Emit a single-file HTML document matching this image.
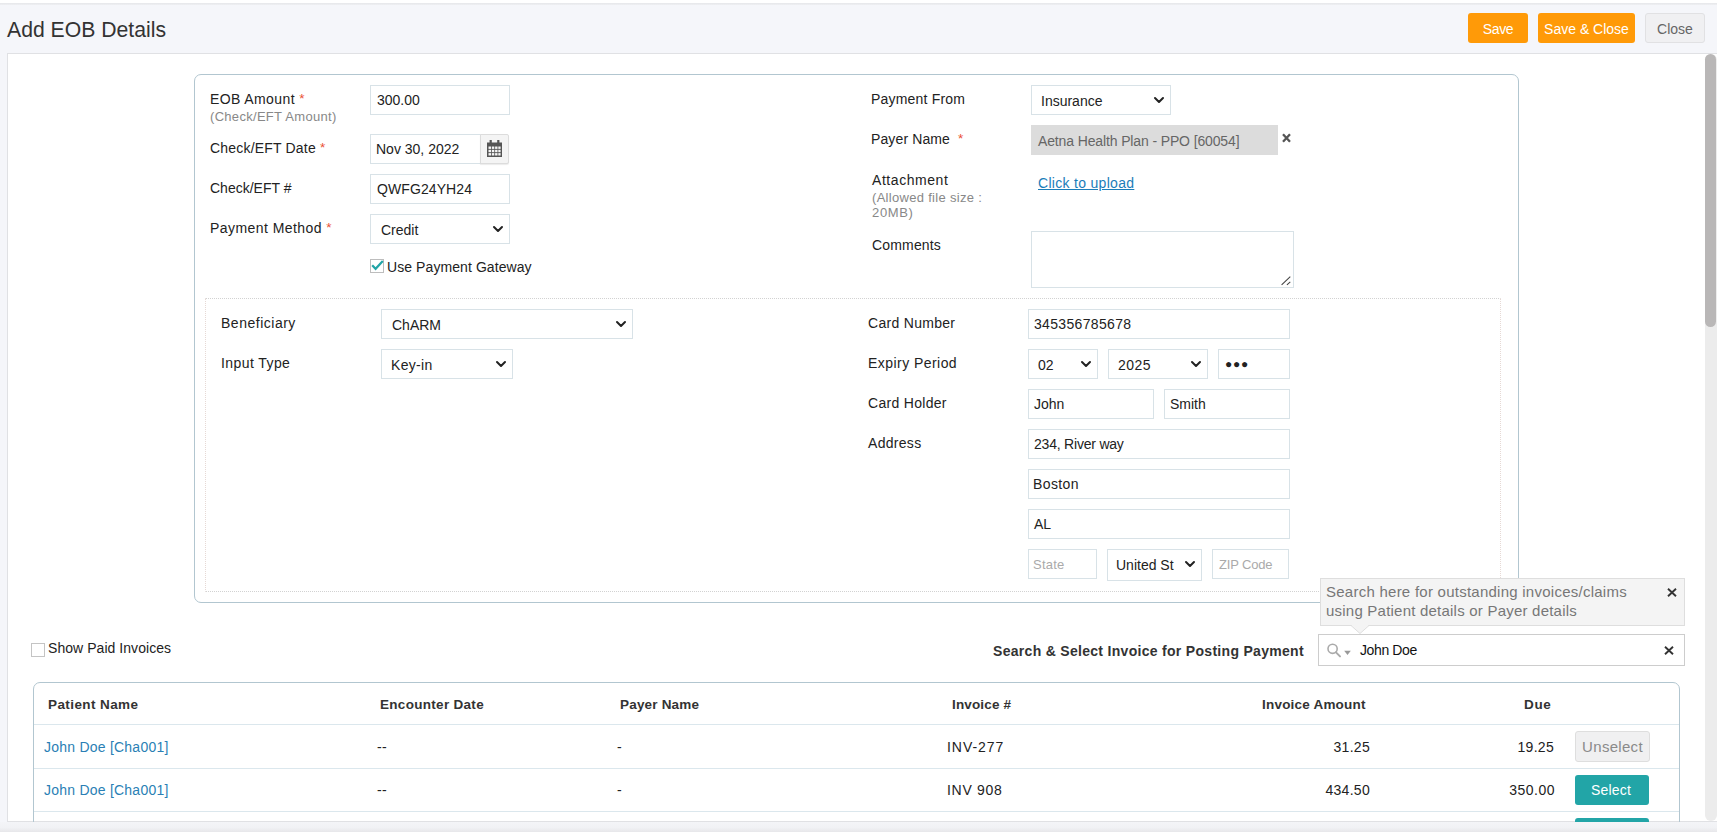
<!DOCTYPE html>
<html lang="en">
<head>
<meta charset="utf-8">
<title>Add EOB Details</title>
<style>
*{box-sizing:border-box;margin:0;padding:0}
html,body{width:1717px;height:832px;overflow:hidden;background:#f5f6fa;font-family:"Liberation Sans",sans-serif;font-size:14px;color:#222}
.abs,.abs>*{position:absolute}
#page{position:relative;width:1717px;height:832px;overflow:hidden}
.t{position:absolute;white-space:nowrap;line-height:16px;transform-origin:0 50%}
#topstrip{left:0;top:0;width:1717px;height:3px;background:#fff}
#topline{left:0;top:3px;width:1717px;height:2px;background:linear-gradient(#e6e7ea,#eff0f3)}
#title{left:7px;top:17px;font-size:21.2px;line-height:26px;color:#333}
.btn{position:absolute;top:13px;height:30px;border-radius:3px;color:#fff;background:#ff9a08;text-align:center;font-size:14px;line-height:32px;white-space:nowrap}
#bclose{background:#f0f0f2;border:1px solid #e1e1e3;color:#666;line-height:30px}
#panel{left:7px;top:53px;width:1710px;height:769px;background:#fff;border:1px solid #e0e1e4;border-right:none}
#sbtrack{left:1705px;top:54px;width:12px;height:767px;background:#ececec;border-radius:6px}
#sbthumb{left:1705px;top:54px;width:11px;height:273px;background:#b9b7b7;border-radius:6px}
#botbar{left:0;top:822px;width:1717px;height:10px;background:linear-gradient(#f4f5f8 0%,#f1f2f5 55%,#e7e7ea 100%)}
#formbox{left:194px;top:74px;width:1325px;height:529px;border:1px solid #b2c6d0;border-radius:7px}
#inner{left:205px;top:298px;width:1296px;height:294px;border:1px dotted #d2d2d2;border-left-color:#e6d9d5;border-right-color:#e6d9d5}
.in{position:absolute;height:30px;border:1px solid #d8e2e7;background:#fff;font-size:14px;line-height:29px;padding-left:6px;white-space:nowrap;color:#222;overflow:hidden}
.sel{line-height:30px}
.lbl{position:absolute;white-space:nowrap;font-size:14px;line-height:16px;color:#222;letter-spacing:.3px}
.sub{position:absolute;white-space:nowrap;font-size:13px;line-height:16px;color:#888;letter-spacing:.3px}
.req{color:#ea4e33;font-size:13.5px;position:relative;top:-1px;letter-spacing:0}
.ph{color:#aaa;font-size:13px}
.th{font-weight:bold;color:#333;font-size:13.5px}
.lk{color:#2a7fb5}
.tb{border-radius:3px;text-align:center;font-size:15px;white-space:nowrap;letter-spacing:.3px}
.chev{position:absolute;right:6.5px;top:11px;width:10px;height:6px}
svg{position:absolute;overflow:visible}
</style>
</head>
<body>
<div id="page">
<div class="abs" id="topstrip"></div>
<div class="abs" id="topline"></div>
<div class="t" id="title">Add EOB Details</div>
<div class="btn" id="bsave" style="left:1468px;width:60px;letter-spacing:-0.34px">Save</div>
<div class="btn" id="bsc" style="left:1538px;width:97px">Save &amp; Close</div>
<div class="btn" id="bclose" style="left:1645px;width:60px">Close</div>
<div class="abs" id="panel"></div>
<div class="abs" id="sbtrack"></div>
<div class="abs" id="sbthumb"></div>
<div class="abs" id="formbox"></div>
<div class="abs" id="inner"></div>

<!-- left column -->
<div class="lbl" id="l1" style="left:210px;top:91px;letter-spacing:0.4px">EOB Amount <span class="req">*</span></div>
<div class="sub" id="l1s" style="left:210px;top:109px">(Check/EFT Amount)</div>
<div class="in" id="i1" style="left:370px;top:85px;width:140px">300.00</div>
<div class="lbl" id="l2" style="left:210px;top:140px;letter-spacing:0.19px">Check/EFT Date <span class="req">*</span></div>
<div class="in" id="i2" style="left:370px;top:134px;width:111px;padding-left:5px">Nov 30, 2022</div>
<div class="lbl" id="l3" style="left:210px;top:180px;letter-spacing:0px">Check/EFT #</div>
<div class="in" id="i3" style="left:370px;top:174px;width:140px;letter-spacing:0.09px">QWFG24YH24</div>
<div class="lbl" id="l4" style="left:210px;top:220px;letter-spacing:0.44px">Payment Method <span class="req">*</span></div>
<div class="in sel" id="i4" style="left:370px;top:214px;width:140px;padding-left:10px">Credit<svg class="chev" viewBox="0 0 10 6"><path d="M1 1 L5 5 L9 1" fill="none" stroke="#222" stroke-width="2" stroke-linecap="round" stroke-linejoin="round"/></svg></div>
<div class="lbl" id="l5" style="left:387px;top:259px;letter-spacing:0.08px">Use Payment Gateway</div>

<!-- right column -->
<div class="lbl" id="r1" style="left:871px;top:91px;letter-spacing:0.2px">Payment From</div>
<div class="in sel" id="ri1" style="left:1031px;top:85px;width:140px;padding-left:9px">Insurance<svg class="chev" viewBox="0 0 10 6"><path d="M1 1 L5 5 L9 1" fill="none" stroke="#222" stroke-width="2" stroke-linecap="round" stroke-linejoin="round"/></svg></div>
<div class="lbl" id="r2" style="left:871px;top:131px;letter-spacing:0.12px">Payer Name &nbsp;<span class="req">*</span></div>
<div class="in" id="ri2" style="left:1031px;top:125px;width:247px;background:#dcdcdc;border-color:#dcdcdc;color:#666;letter-spacing:-0.13px;line-height:31px">Aetna Health Plan - PPO [60054]</div>
<div class="lbl" id="r3" style="left:872px;top:172px;letter-spacing:0.56px">Attachment</div>
<div class="sub" id="r3s" style="left:872px;top:190px">(Allowed file size :</div>
<div class="sub" id="r3t" style="left:872px;top:205px;letter-spacing:0.65px">20MB)</div>
<div class="lbl" id="ru" style="left:1038px;top:175px;color:#1b7db9;text-decoration:underline">Click to upload</div>
<div class="lbl" id="r4" style="left:872px;top:237px;letter-spacing:0.17px">Comments</div>
<div class="in" id="ri4" style="left:1031px;top:231px;width:263px;height:57px"></div>

<!-- gateway section -->
<div class="lbl" id="g1" style="left:221px;top:315px;letter-spacing:0.51px">Beneficiary</div>
<div class="in sel" id="gi1" style="left:381px;top:309px;width:252px;padding-left:10px">ChARM<svg class="chev" viewBox="0 0 10 6"><path d="M1 1 L5 5 L9 1" fill="none" stroke="#222" stroke-width="2" stroke-linecap="round" stroke-linejoin="round"/></svg></div>
<div class="lbl" id="g2" style="left:221px;top:355px;letter-spacing:0.42px">Input Type</div>
<div class="in sel" id="gi2" style="left:381px;top:349px;width:132px;padding-left:9px;letter-spacing:0.32px">Key-in<svg class="chev" viewBox="0 0 10 6"><path d="M1 1 L5 5 L9 1" fill="none" stroke="#222" stroke-width="2" stroke-linecap="round" stroke-linejoin="round"/></svg></div>

<div class="lbl" id="c1" style="left:868px;top:315px">Card Number</div>
<div class="in" id="ci1" style="left:1028px;top:309px;width:262px;letter-spacing:0.33px;padding-left:5px">345356785678</div>
<div class="lbl" id="c2" style="left:868px;top:355px;letter-spacing:0.45px">Expiry Period</div>
<div class="in sel" id="ci2a" style="left:1028px;top:349px;width:70px;padding-left:9px">02<svg class="chev" viewBox="0 0 10 6"><path d="M1 1 L5 5 L9 1" fill="none" stroke="#222" stroke-width="2" stroke-linecap="round" stroke-linejoin="round"/></svg></div>
<div class="in sel" id="ci2b" style="left:1108px;top:349px;width:100px;padding-left:9px;letter-spacing:0.5px">2025<svg class="chev" viewBox="0 0 10 6"><path d="M1 1 L5 5 L9 1" fill="none" stroke="#222" stroke-width="2" stroke-linecap="round" stroke-linejoin="round"/></svg></div>
<div class="in" id="ci2c" style="left:1218px;top:349px;width:72px;font-size:12px;letter-spacing:.7px">&#9679;&#9679;&#9679;</div>
<div class="lbl" id="c3" style="left:868px;top:395px">Card Holder</div>
<div class="in" id="ci3a" style="left:1028px;top:389px;width:126px;padding-left:5px">John</div>
<div class="in" id="ci3b" style="left:1164px;top:389px;width:126px;padding-left:5px">Smith</div>
<div class="lbl" id="c4" style="left:868px;top:435px">Address</div>
<div class="in" id="ci4" style="left:1028px;top:429px;width:262px;letter-spacing:-0.21px;padding-left:5px">234, River way</div>
<div class="in" id="ci5" style="left:1028px;top:469px;width:262px;letter-spacing:0.38px;padding-left:4px">Boston</div>
<div class="in" id="ci6" style="left:1028px;top:509px;width:262px;padding-left:5px">AL</div>
<div class="in ph" id="ci7a" style="left:1028px;top:549px;width:69px;letter-spacing:0.22px;padding-left:4px">State</div>
<div class="in sel" id="ci7b" style="left:1107px;top:549px;width:95px;height:32px;padding-left:8px">United St<svg class="chev" viewBox="0 0 10 6"><path d="M1 1 L5 5 L9 1" fill="none" stroke="#222" stroke-width="2" stroke-linecap="round" stroke-linejoin="round"/></svg></div>
<div class="in ph" id="ci7c" style="left:1212px;top:549px;width:77px;letter-spacing:-0.16px">ZIP Code</div>

<!-- tooltip -->
<div class="abs" id="tip" style="left:1320px;top:578px;width:365px;height:48px;background:#f4f4f4;border:1px solid #dedede"></div>
<div class="lbl" id="tp1" style="left:1326px;top:583px;font-size:15px;color:#777;line-height:18px;letter-spacing:0.25px">Search here for outstanding invoices/claims</div>
<div class="lbl" id="tp2" style="left:1326px;top:602px;font-size:15px;color:#777;line-height:18px;letter-spacing:0.22px">using Patient details or Payer details</div>

<!-- search row -->
<div class="abs" id="cb2" style="left:31px;top:643px;width:14px;height:14px;border:1px solid #c4c4c4;background:#fff"></div>
<div class="lbl" id="sp" style="left:48px;top:640px;letter-spacing:0.05px">Show Paid Invoices</div>
<div class="lbl" id="ss" style="left:993px;top:643px;font-weight:bold;color:#333;font-size:14px">Search &amp; Select Invoice for Posting Payment</div>
<div class="in" id="si" style="left:1318px;top:634px;width:367px;height:32px;line-height:30px;padding-left:41px;border-color:#cdcdcd;color:#111;letter-spacing:-0.39px">John Doe</div>

<!-- table -->
<div class="abs" id="tbl" style="left:33px;top:682px;width:1647px;height:160px;border:1px solid #b2c6d0;border-radius:7px"></div>
<div class="abs" id="hl1" style="left:34px;top:724px;width:1645px;height:1px;background:#dbe7ed"></div>
<div class="abs" id="hl2" style="left:34px;top:768px;width:1645px;height:1px;background:#dbe7ed"></div>
<div class="abs" id="hl3" style="left:34px;top:811px;width:1645px;height:1px;background:#dbe7ed"></div>
<div class="lbl th" id="h1" style="left:48px;top:697px;letter-spacing:0.41px">Patient Name</div>
<div class="lbl th" id="h2" style="left:380px;top:697px">Encounter Date</div>
<div class="lbl th" id="h3" style="left:620px;top:697px;letter-spacing:0.19px">Payer Name</div>
<div class="lbl th" id="h4" style="left:952px;top:697px;letter-spacing:0.15px">Invoice #</div>
<div class="lbl th" id="h5" style="left:1262px;top:697px;letter-spacing:0.21px">Invoice Amount</div>
<div class="lbl th" id="h6" style="left:1524px;top:697px;letter-spacing:0.65px">Due</div>

<div class="lbl lk" id="a1" style="left:44px;top:739px;letter-spacing:0.23px">John Doe [Cha001]</div>
<div class="lbl" id="a2" style="left:377px;top:739px">--</div>
<div class="lbl" id="a3" style="left:617px;top:739px">-</div>
<div class="lbl" id="a4" style="left:947px;top:739px;letter-spacing:0.95px">INV-277</div>
<div class="lbl num" id="a5" style="right:347px;top:739px">31.25</div>
<div class="lbl num" id="a6" style="right:163px;top:739px">19.25</div>
<div class="abs tb" id="a7" style="left:1575px;top:731px;width:75px;height:31px;background:#f0f0f1;border:1px solid #dedede;color:#8a8a8a;line-height:30px">Unselect</div>

<div class="lbl lk" id="b1" style="left:44px;top:782px;letter-spacing:0.23px">John Doe [Cha001]</div>
<div class="lbl" id="b2" style="left:377px;top:782px">--</div>
<div class="lbl" id="b3" style="left:617px;top:782px">-</div>
<div class="lbl" id="b4" style="left:947px;top:782px;letter-spacing:0.72px">INV 908</div>
<div class="lbl num" id="b5" style="right:347px;top:782px">434.50</div>
<div class="lbl num" id="b6" style="right:162px;top:782px;letter-spacing:0.5px">350.00</div>
<div class="abs tb" id="b7" style="left:1575px;top:775px;width:74px;height:30px;background:#22a5a7;color:#fff;line-height:30px;font-size:14px;letter-spacing:0.18px;padding-right:2px">Select</div>
<div class="abs tb" id="c7" style="left:1575px;top:818px;width:74px;height:30px;background:#22a5a7;color:#fff"></div>

<!-- icons -->
<div class="abs" id="calbtn" style="left:480px;top:134px;width:29px;height:30px;background:#f4f4f4;border:1px solid #dcdcdc;border-radius:0 2px 2px 0;box-shadow:0 1px 1px rgba(0,0,0,.08)"></div>
<svg id="calico" style="left:487px;top:140px" width="15" height="17" viewBox="0 0 15 17">
<rect x="0" y="2.5" width="15" height="14.5" fill="#555"/>
<rect x="2.6" y="0" width="2.2" height="4.5" fill="#555"/><rect x="10.2" y="0" width="2.2" height="4.5" fill="#555"/>
<g fill="#f4f4f4"><rect x="1.5" y="6.5" width="2.6" height="2.4"/><rect x="4.9" y="6.5" width="2.4" height="2.4"/><rect x="8.1" y="6.5" width="2.4" height="2.4"/><rect x="11.3" y="6.5" width="2.3" height="2.4"/>
<rect x="1.5" y="9.8" width="2.6" height="2.4"/><rect x="4.9" y="9.8" width="2.4" height="2.4"/><rect x="8.1" y="9.8" width="2.4" height="2.4"/><rect x="11.3" y="9.8" width="2.3" height="2.4"/>
<rect x="1.5" y="13.1" width="2.6" height="2.4"/><rect x="4.9" y="13.1" width="2.4" height="2.4"/><rect x="8.1" y="13.1" width="2.4" height="2.4"/><rect x="11.3" y="13.1" width="2.3" height="2.4"/></g>
</svg>
<div class="abs" id="cb1" style="left:370px;top:259px;width:14px;height:14px;border:1px solid #bdbdbd;background:#fff"></div>
<svg id="cb1k" style="left:371px;top:260px" width="13" height="11" viewBox="0 0 13 11"><path d="M1.2 5.2 L4.6 8.8 L11.8 1" fill="none" stroke="#22a5a7" stroke-width="2.2"/></svg>
<svg id="payx" style="left:1282px;top:133px" width="9" height="10" viewBox="0 0 9 10"><path d="M1 1.2 L8 8.8 M8 1.2 L1 8.8" stroke="#555" stroke-width="2.3" fill="none"/></svg>
<svg id="rsz" style="left:1280px;top:275px" width="12" height="11" viewBox="0 0 12 11"><path d="M1.6 9.8 L10.3 1.6 M6.9 9.8 L10.3 6.9" stroke="#444" stroke-width="1.1" fill="none"/></svg>
<svg id="tipcar" style="left:1351px;top:625px" width="18" height="9" viewBox="0 0 18 9"><path d="M0 0 L9 8.5 L18 0 Z" fill="#f4f4f4"/><path d="M0 .5 L9 8.5 L18 .5" fill="none" stroke="#dedede" stroke-width="1"/></svg>
<svg id="tipx" style="left:1667px;top:588px" width="10" height="9" viewBox="0 0 10 9"><path d="M1 .8 L9 8.2 M9 .8 L1 8.2" stroke="#333" stroke-width="1.9" fill="none"/></svg>
<svg id="srchx" style="left:1664px;top:646px" width="10" height="9" viewBox="0 0 10 9"><path d="M1 .8 L9 8.2 M9 .8 L1 8.2" stroke="#333" stroke-width="1.9" fill="none"/></svg>
<svg id="srchico" style="left:1326px;top:643px" width="26" height="15" viewBox="0 0 26 15"><circle cx="6.6" cy="5.8" r="4.6" fill="none" stroke="#aaa" stroke-width="1.6"/><path d="M10 9.4 L14 13.4" stroke="#aaa" stroke-width="2" stroke-linecap="round"/><path d="M18.2 7.8 L24.8 7.8 L21.5 12 Z" fill="#999"/></svg>

<div id="botbar" class="abs"></div>
</div>
</body>
</html>
